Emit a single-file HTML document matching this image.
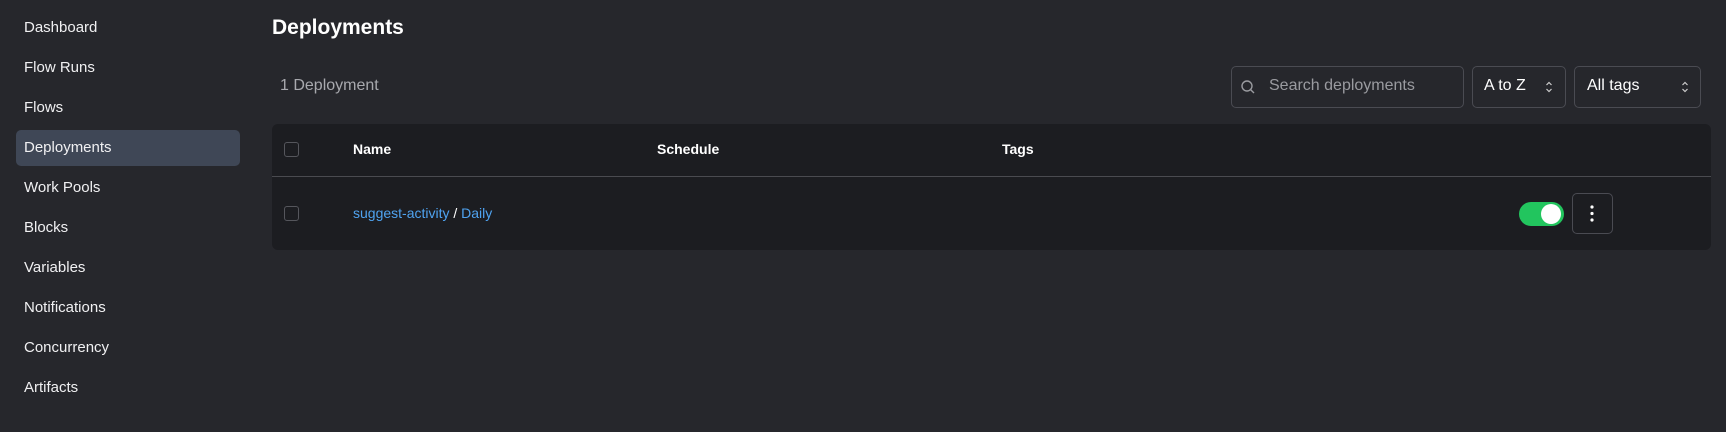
<!DOCTYPE html>
<html><head><style>
*{box-sizing:border-box;margin:0;padding:0}
body{width:1726px;height:432px;background:#26272c;font-family:"Liberation Sans",sans-serif;color:#fff;position:relative;overflow:hidden}
.nav{position:absolute;left:24px;font-size:15px;color:#f0f0f2}
.active{position:absolute;left:16px;top:130px;width:224px;height:36px;background:#3f4756;border-radius:5px}
.abs{position:absolute}
.box{position:absolute;border:1px solid #4a4b52;border-radius:5px}
.cb{position:absolute;left:284px;width:15px;height:15px;border:1.5px solid #55565c;border-radius:3px}
</style></head><body>
<div class="active"></div>
<div class="nav" style="top:19px">Dashboard</div>
<div class="nav" style="top:59px">Flow Runs</div>
<div class="nav" style="top:99px">Flows</div>
<div class="nav" style="top:139px">Deployments</div>
<div class="nav" style="top:179px">Work Pools</div>
<div class="nav" style="top:219px">Blocks</div>
<div class="nav" style="top:259px">Variables</div>
<div class="nav" style="top:299px">Notifications</div>
<div class="nav" style="top:339px">Concurrency</div>
<div class="nav" style="top:379px">Artifacts</div>

<div class="abs" style="left:272px;top:16px;font-size:21px;font-weight:bold">Deployments</div>
<div class="abs" style="left:280px;top:77px;font-size:16px;color:#a8a9ae">1 Deployment</div>

<div class="box" style="left:1231px;top:66px;width:233px;height:42px"></div>
<svg class="abs" style="left:1240px;top:79px" width="16" height="16" viewBox="0 0 16 16" fill="none" stroke="#9a9ba0" stroke-width="1.4"><circle cx="7" cy="7" r="5"/><path d="M10.7 10.7L14 14"/></svg>
<div class="abs" style="left:1269px;top:77px;font-size:16px;color:#9a9ba0">Search deployments</div>
<div class="box" style="left:1472px;top:66px;width:94px;height:42px"></div>
<div class="abs" style="left:1484px;top:77px;font-size:16px">A to Z</div>
<svg class="abs" style="left:1545px;top:80px" width="8" height="14" viewBox="0 0 8 14" fill="none" stroke="#ccc" stroke-width="1.2"><path d="M1.5 5L4 2.5L6.5 5M1.5 9L4 11.5L6.5 9"/></svg>
<div class="box" style="left:1574px;top:66px;width:127px;height:42px"></div>
<div class="abs" style="left:1587px;top:77px;font-size:16px">All tags</div>
<svg class="abs" style="left:1681px;top:80px" width="8" height="14" viewBox="0 0 8 14" fill="none" stroke="#ccc" stroke-width="1.2"><path d="M1.5 5L4 2.5L6.5 5M1.5 9L4 11.5L6.5 9"/></svg>

<div class="abs" style="left:272px;top:124px;width:1439px;height:126px;background:#1c1d21;border-radius:6px"></div>
<div class="abs" style="left:272px;top:176px;width:1439px;height:1px;background:#4a4b50"></div>
<div class="cb" style="top:142px"></div>
<div class="abs" style="left:353px;top:141px;font-size:14px;font-weight:bold">Name</div>
<div class="abs" style="left:657px;top:141px;font-size:14px;font-weight:bold">Schedule</div>
<div class="abs" style="left:1002px;top:141px;font-size:14px;font-weight:bold">Tags</div>
<div class="cb" style="top:206px"></div>
<div class="abs" style="left:353px;top:205px;font-size:14px;color:#4fa3f0">suggest-activity <span style="color:#fff">/</span> Daily</div>
<div class="abs" style="left:1519px;top:202px;width:45px;height:24px;background:#22c55e;border-radius:12px"></div>
<div class="abs" style="left:1541px;top:204px;width:20px;height:20px;background:#fff;border-radius:50%"></div>
<div class="box" style="left:1572px;top:193px;width:41px;height:41px"></div>
<svg class="abs" style="left:1590px;top:204px" width="4" height="19"><circle cx="2" cy="3" r="1.6" fill="#fff"/><circle cx="2" cy="9.5" r="1.6" fill="#fff"/><circle cx="2" cy="16" r="1.6" fill="#fff"/></svg>
</body></html>
